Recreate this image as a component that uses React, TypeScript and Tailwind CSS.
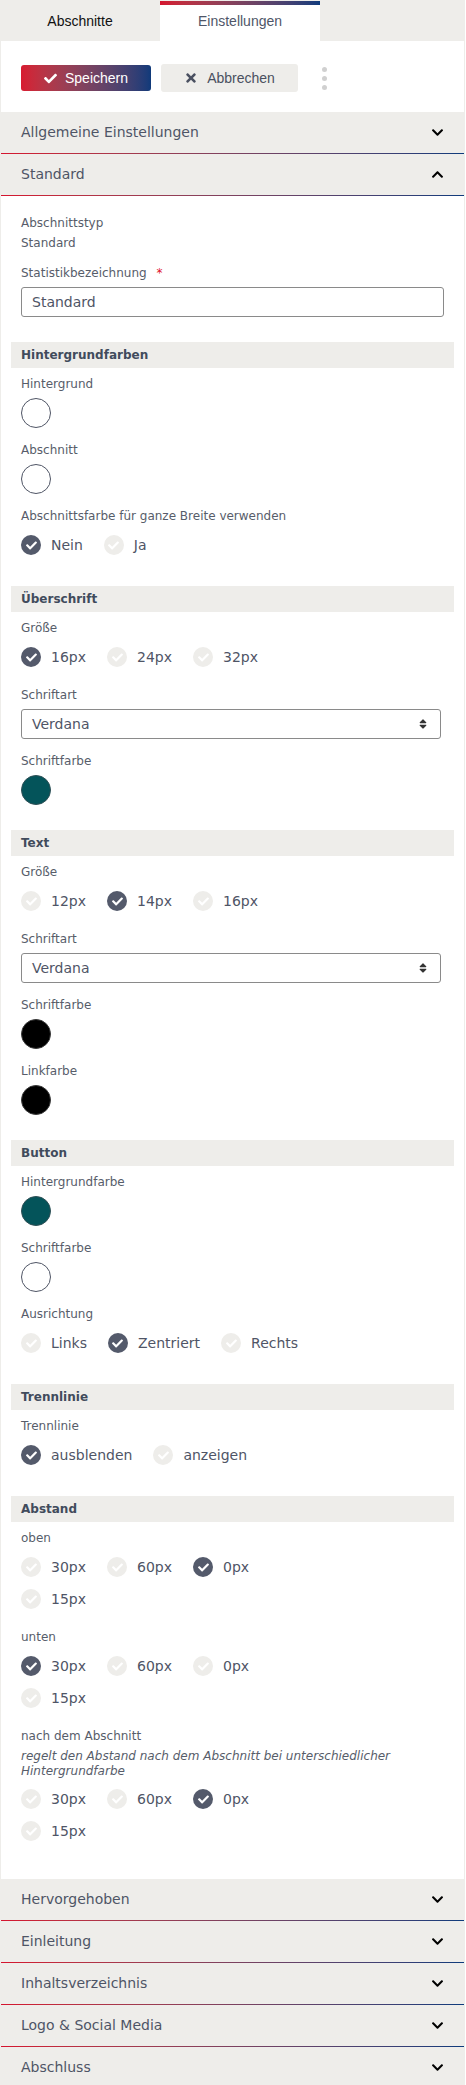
import React from "react";
import { FaCheck, FaTimes, FaChevronDown, FaChevronUp, FaSort } from "react-icons/fa";

const font = { fontFamily: '"DejaVu Sans", Verdana, sans-serif' };
const arial = { fontFamily: '"Liberation Sans", Arial, sans-serif' };

function GradLine() {
  return <div className="h-px bg-linear-to-r from-[#d5132e] to-[#0c3b7c]" />;
}

function AccHeader({ title, open }: { title: string; open?: boolean }) {
  return (
    <div className="bg-[#eeedea]">
      <div className="h-[41px] flex items-center justify-between pl-[20px] pr-[20px]">
        <span className="text-[14px] text-[#4e5566]">{title}</span>
        {open ? (
          <FaChevronUp className="text-black" size={13} />
        ) : (
          <FaChevronDown className="text-black" size={13} />
        )}
      </div>
      <GradLine />
    </div>
  );
}

function SectionHeader({ title }: { title: string }) {
  return (
    <div className="h-[26px] bg-[#eeedea] flex items-center pl-[10px] mb-[7px]">
      <span className="text-[12px] font-bold text-[#414b5c] leading-[18px]">{title}</span>
    </div>
  );
}

function Label({ children }: { children: React.ReactNode }) {
  return <div className="text-[12px] leading-[18px] text-[#575d6a]">{children}</div>;
}

function Swatch({ color, last }: { color: string; last?: boolean }) {
  const border =
    color === "#ffffff" ? "border-[#4f5565]" : color === "#000000" ? "border-[#3a3a3a]" : "border-[#2f4f55]";
  return (
    <div className={last ? "mt-[5px] mb-[25px]" : "mt-[5px] mb-[13px]"}>
      <div className={`w-[30px] h-[30px] rounded-full border ${border}`} style={{ backgroundColor: color }} />
    </div>
  );
}

function Radio({ label, checked }: { label: string; checked?: boolean }) {
  return (
    <div className="flex items-center gap-[10px] h-[20px]">
      <div
        className={`w-[20px] h-[20px] rounded-full flex items-center justify-center ${
          checked ? "bg-[#545a6b]" : "bg-[#eeedea]"
        }`}
      >
        <FaCheck className="text-white" size={11} />
      </div>
      <span className="text-[14px] text-[#4f5566] leading-[20px]">{label}</span>
    </div>
  );
}

function RadioGroup({
  options,
  checked,
  last,
}: {
  options: string[];
  checked: number;
  last?: boolean;
}) {
  return (
    <div
      className={`w-[300px] flex flex-wrap gap-x-[21px] gap-y-[12px] mt-[10px] ${
        last ? "mb-[31px]" : "mb-[19px]"
      }`}
    >
      {options.map((o, i) => (
        <Radio key={o} label={o} checked={i === checked} />
      ))}
    </div>
  );
}

function Select() {
  return (
    <div className="mt-[5px] mb-[13px] w-[420px]">
      <div className="h-[30px] border border-[#8a8a8a] rounded-[3px] flex items-center justify-between pl-[10px] pr-[11px]">
        <span className="text-[14px] text-[#4f5566]">Verdana</span>
        <FaSort className="text-[#333]" size={12} />
      </div>
    </div>
  );
}

export default function App() {
  return (
    <div className="w-[465px] bg-white" style={font}>
      {/* Tabs */}
      <div className="flex bg-[#eeedea] h-[41px]">
        <div className="w-[160px] flex items-center justify-center pt-[1px]">
          <span className="text-[14px] text-[#111]" style={arial}>
            Abschnitte
          </span>
        </div>
        <div className="w-[160px] bg-white flex flex-col">
          <div className="h-[1px] bg-[#eeedea]" />
          <div className="h-[4px] bg-linear-to-r from-[#d5132e] to-[#0c3b7c]" />
          <div className="flex-1 flex items-center justify-center pb-[3px]">
            <span className="text-[14px] text-[#4f5668]" style={arial}>
              Einstellungen
            </span>
          </div>
        </div>
      </div>

      <div className="border-l border-r border-[#eeedea]">
        {/* Buttons */}
        <div className="flex items-center pl-[20px] pt-[23px] pb-[20px] gap-[10px]">
          <button
            className="w-[130px] h-[26px] rounded-[3px] bg-linear-to-r from-[#d81a30] to-[#0f3a7a] flex items-center justify-center gap-[8px] text-white"
            style={arial}
          >
            <FaCheck size={13} />
            <span className="text-[14px]">Speichern</span>
          </button>
          <button
            className="w-[137px] h-[28px] rounded-[3px] bg-[#eeedea] flex items-center justify-center gap-[9px] text-[#4a5060]"
            style={arial}
          >
            <FaTimes size={14} />
            <span className="text-[14px]">Abbrechen</span>
          </button>
          <div className="ml-[14px] flex flex-col gap-[4px]">
            <div className="w-[5px] h-[5px] rounded-full bg-[#d0d0d0]" />
            <div className="w-[5px] h-[5px] rounded-full bg-[#d0d0d0]" />
            <div className="w-[5px] h-[5px] rounded-full bg-[#d0d0d0]" />
          </div>
        </div>

        <AccHeader title="Allgemeine Einstellungen" />
        <AccHeader title="Standard" open />

        {/* Standard content */}
        <div className="px-[10px] pt-[17px] pb-[38px]">
          <div className="px-[10px]">
            <div className="text-[12px] leading-[20px] text-[#575d6a]">Abschnittstyp</div>
            <div className="text-[12px] leading-[20px] text-[#575d6a] mb-[11px]">Standard</div>
            <Label>
              Statistikbezeichnung <span className="text-[#e0102a] ml-[6px]">*</span>
            </Label>
            <div className="mt-[5px] mb-[25px] h-[30px] border border-[#8a8a8a] rounded-[3px] flex items-center pl-[10px]">
              <span className="text-[14px] text-[#4f5566]">Standard</span>
            </div>
          </div>

          <SectionHeader title="Hintergrundfarben" />
          <div className="px-[10px]">
            <Label>Hintergrund</Label>
            <Swatch color="#ffffff" />
            <Label>Abschnitt</Label>
            <Swatch color="#ffffff" />
            <Label>Abschnittsfarbe für ganze Breite verwenden</Label>
            <RadioGroup options={["Nein", "Ja"]} checked={0} last />
          </div>

          <SectionHeader title="Überschrift" />
          <div className="px-[10px]">
            <Label>Größe</Label>
            <RadioGroup options={["16px", "24px", "32px"]} checked={0} />
            <Label>Schriftart</Label>
            <Select />
            <Label>Schriftfarbe</Label>
            <Swatch color="#04545a" last />
          </div>

          <SectionHeader title="Text" />
          <div className="px-[10px]">
            <Label>Größe</Label>
            <RadioGroup options={["12px", "14px", "16px"]} checked={1} />
            <Label>Schriftart</Label>
            <Select />
            <Label>Schriftfarbe</Label>
            <Swatch color="#000000" />
            <Label>Linkfarbe</Label>
            <Swatch color="#000000" last />
          </div>

          <SectionHeader title="Button" />
          <div className="px-[10px]">
            <Label>Hintergrundfarbe</Label>
            <Swatch color="#04545a" />
            <Label>Schriftfarbe</Label>
            <Swatch color="#ffffff" />
            <Label>Ausrichtung</Label>
            <RadioGroup options={["Links", "Zentriert", "Rechts"]} checked={1} last />
          </div>

          <SectionHeader title="Trennlinie" />
          <div className="px-[10px]">
            <Label>Trennlinie</Label>
            <RadioGroup options={["ausblenden", "anzeigen"]} checked={0} last />
          </div>

          <SectionHeader title="Abstand" />
          <div className="px-[10px]">
            <Label>oben</Label>
            <RadioGroup options={["30px", "60px", "0px", "15px"]} checked={2} />
            <Label>unten</Label>
            <RadioGroup options={["30px", "60px", "0px", "15px"]} checked={0} />
            <Label>nach dem Abschnitt</Label>
            <div className="text-[12px] leading-[15px] italic text-[#575d6a] mt-[4px]">
              regelt den Abstand nach dem Abschnitt bei unterschiedlicher Hintergrundfarbe
            </div>
            <div className="w-[300px] flex flex-wrap gap-x-[21px] gap-y-[12px] mt-[10px]">
              {["30px", "60px", "0px", "15px"].map((o, i) => (
                <Radio key={o} label={o} checked={i === 2} />
              ))}
            </div>
          </div>
        </div>

        <AccHeader title="Hervorgehoben" />
        <AccHeader title="Einleitung" />
        <AccHeader title="Inhaltsverzeichnis" />
        <AccHeader title="Logo & Social Media" />
        <AccHeader title="Abschluss" />
      </div>
    </div>
  );
}
